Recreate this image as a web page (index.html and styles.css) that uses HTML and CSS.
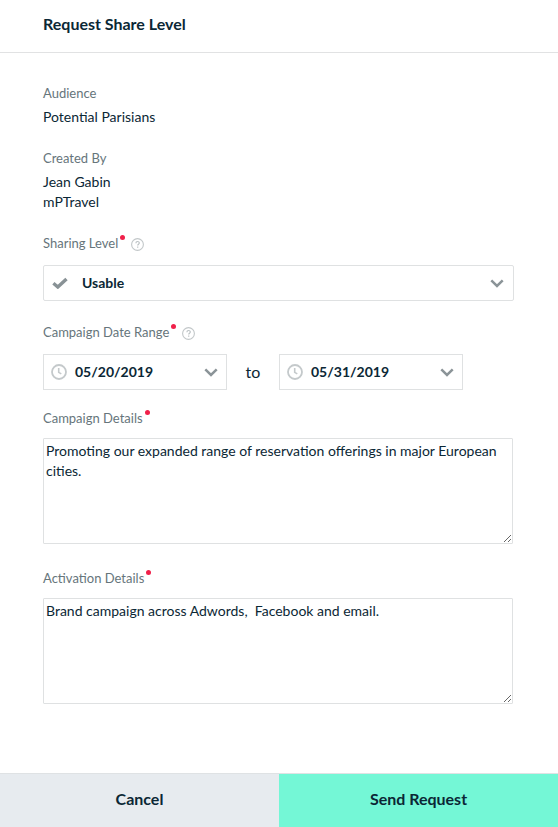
FILE: index.html
```html
<!DOCTYPE html>
<html lang="en">
<head>
<meta charset="utf-8">
<title>Request Share Level</title>
<link rel="stylesheet" href="styles.css">
</head>
<body>
<svg class="defs" width="0" height="0">
  <symbol id="chevron" viewBox="0 0 14 9"><path d="M1.3 1.4 7 7l5.700-5.600" fill="none" stroke="#8b9498" stroke-width="2.500"/></symbol>
  <symbol id="clock" viewBox="0 0 16 16"><circle cx="8" cy="8" r="7" fill="none" stroke="#c4c9cb" stroke-width="1.800"/><path d="M7.700 4v4.400l2.600 1.500" fill="none" stroke="#c4c9cb" stroke-width="1.600"/></symbol>
  <symbol id="help" viewBox="0 0 13 13"><circle cx="6.500" cy="6.500" r="5.900" fill="none" stroke="#c2c7c9" stroke-width="1.100"/><path d="M4.900 5.200c0-2.300 3.400-2.200 3.400-.2 0 1.200-1.600 1.200-1.600 2.500M6.700 8.600v1.200" fill="none" stroke="#bcc2c4" stroke-width="1.200"/></symbol>
</svg>
<div class="dialog">
  <header class="header"><h1 class="title">Request Share Level</h1></header>
  <main class="content">
    <section class="info">
      <div class="label"><span class="t-audience">Audience</span></div>
      <div class="value t-parisians">Potential Parisians</div>
    </section>
    <section class="info created">
      <div class="label"><span class="t-created">Created By</span></div>
      <div class="value t-jean">Jean Gabin</div>
      <div class="value t-company">mPTravel</div>
    </section>
    <section class="field">
      <div class="label"><span class="t-sharing">Sharing Level</span><i class="required"></i><svg class="help"><use href="#help"/></svg></div>
      <div class="select">
        <svg class="check" viewBox="0 0 16 12"><path d="M1.400 6.300 5.800 10 14.500 2" fill="none" stroke="#899296" stroke-width="3.400"/></svg>
        <span class="t-usable">Usable</span>
        <svg class="chevron"><use href="#chevron"/></svg>
      </div>
    </section>
    <section class="field dates">
      <div class="label"><span class="t-range">Campaign Date Range</span><i class="required"></i><svg class="help"><use href="#help"/></svg></div>
      <div class="date-row">
        <div class="date"><svg class="clock"><use href="#clock"/></svg><span class="t-from">05/20/2019</span><svg class="chevron"><use href="#chevron"/></svg></div>
        <span class="to">to</span>
        <div class="date"><svg class="clock"><use href="#clock"/></svg><span class="t-until">05/31/2019</span><svg class="chevron"><use href="#chevron"/></svg></div>
      </div>
    </section>
    <section class="field details">
      <div class="label"><span class="t-details">Campaign Details</span><i class="required"></i></div>
      <textarea class="t-promo">Promoting our expanded range of reservation offerings in major European cities.</textarea>
    </section>
    <section class="field activation">
      <div class="label"><span class="t-activation">Activation Details</span><i class="required"></i></div>
      <textarea class="t-brand">Brand campaign across Adwords,  Facebook and email.</textarea>
    </section>
  </main>
  <footer class="footer">
    <button class="cancel"><span>Cancel</span></button>
    <button class="send"><span>Send Request</span></button>
  </footer>
</div>
</body>
</html>
```
FILE: styles.css
```css
* { box-sizing: border-box; }
body { margin: 0; background: #fff; color: #0b2735; font: 14px/20px Lato, "Liberation Sans", sans-serif; }
.defs { position: absolute; }
.dialog { height: 827px; display: flex; flex-direction: column; }
.header { height: 53px; padding: 14px 43px 0; border-bottom: 1px solid #e1e2e3; }
.title { margin: 0; font-size: 16px; line-height: 20px; font-weight: 700; }
.content { flex: 1; padding: 30px 44px 0 43px; }
.label { display: flex; height: 20px; font-size: 13px; color: #66757b; white-space: nowrap; }
.info .label { margin-bottom: 4px; }
.value { white-space: nowrap; }
.created { margin-top: 21px; }
.field { margin-top: 21px; }
.required { width: 5px; height: 5px; margin: 2px 0 0 2px; border-radius: 50%; background: #f0204a; }
.help { width: 13px; height: 13px; margin: 5px 0 0 6px; }
.select, .date { display: flex; align-items: center; height: 36px; border: 1px solid #dfe1e2; font-weight: 700; }
.select { margin-top: 12px; border-radius: 2px; padding: 0 9px 0 8px; }
.check { width: 16px; height: 12px; margin-right: 14px; }
.chevron { width: 14px; height: 9px; margin-left: auto; }
.date-row { display: flex; align-items: center; margin-top: 12px; }
.date { width: 184px; padding: 0 8px 0 7px; }
.clock { width: 16px; height: 16px; margin-right: 8px; }
.to { width: 52px; text-align: center; font-size: 16px; }
.details { margin-top: 18px; }
.activation { margin-top: 24px; }
textarea { display: block; width: 470px; height: 106px; margin-top: 10px; padding: 2px; border: 1px solid #dfe1e2; border-radius: 1px; color: inherit; background: #fff; font: inherit; resize: both; outline: 0; }
.footer { display: flex; height: 54px; border-top: 1px solid #dfe2e4; }
.footer button { width: 279px; border: 0; padding: 0 0 3px; font: 700 16px/20px Lato, "Liberation Sans", sans-serif; color: #0b2735; }
.footer .cancel { background: #e7ebef; }
.footer .send { background: #74f7d6; }
```
